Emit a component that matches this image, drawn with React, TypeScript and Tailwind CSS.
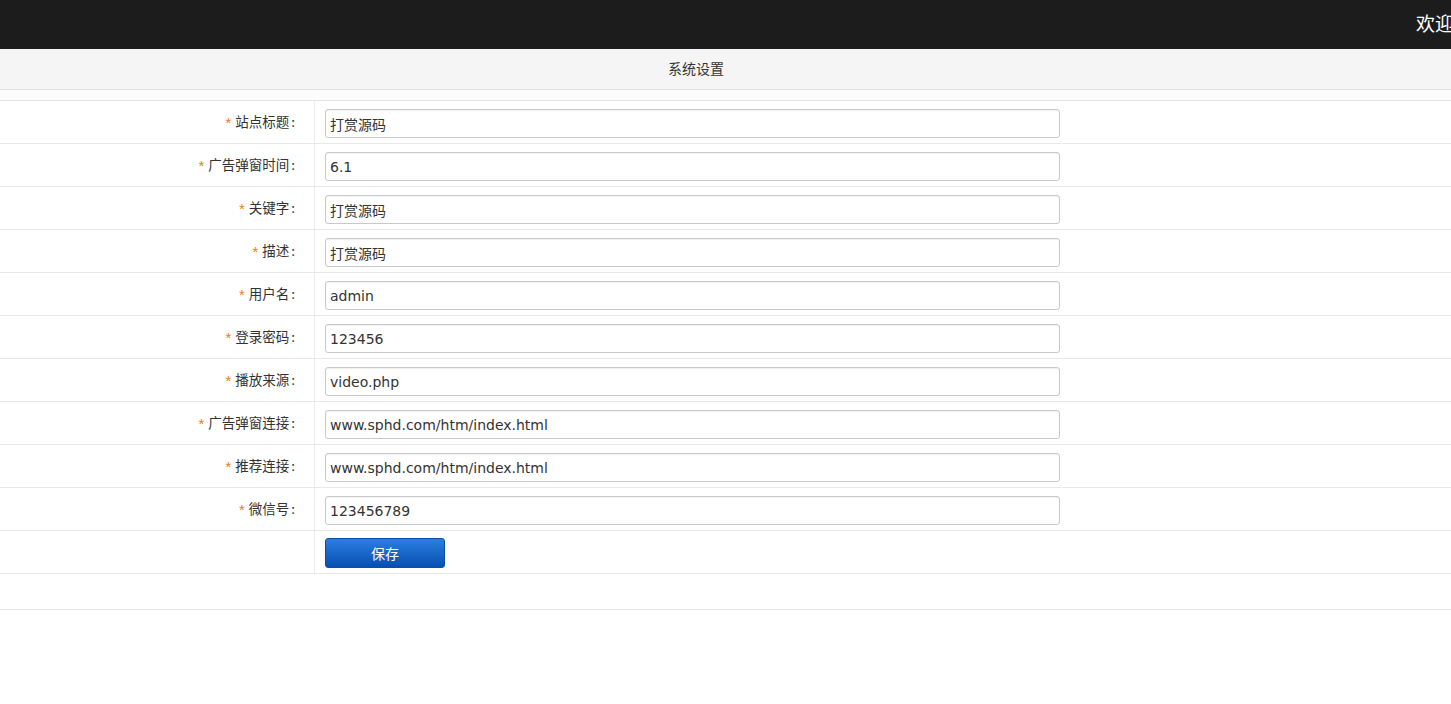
const ROWS = [
  { label: '站点标题', value: '打赏源码' },
  { label: '广告弹窗时间', value: '6.1' },
  { label: '关键字', value: '打赏源码' },
  { label: '描述', value: '打赏源码' },
  { label: '用户名', value: 'admin' },
  { label: '登录密码', value: '123456' },
  { label: '播放来源', value: 'video.php' },
  { label: '广告弹窗连接', value: 'www.sphd.com/htm/index.html' },
  { label: '推荐连接', value: 'www.sphd.com/htm/index.html' },
  { label: '微信号', value: '123456789' },
]

const cjk = "font-['Noto_Sans_CJK_SC',sans-serif]"

export default function App() {
  return (
    <div className={`min-h-[704px] w-[1451px] overflow-hidden bg-white text-[#333] ${cjk}`}>
      <div className="flex h-[49px] justify-end bg-[#1c1c1c]">
        <div className="w-[35px] overflow-hidden whitespace-nowrap pt-[10px] text-[19px] leading-[26px] text-white">欢迎</div>
      </div>

      <div className="h-[41px] border-b border-[#e2e2e2] bg-[#f5f5f5]">
        <div className="w-[1392px] text-center text-[14px] leading-[38px]">系统设置</div>
      </div>
      <div className="h-[11px] border-b border-[#e6e6e6] bg-[#fcfcfc]" />

      {ROWS.map((row) => (
        <div key={row.label} className="flex h-[43px] border-b border-[#e8e8e8]">
          <div className="flex w-[315px] items-start justify-end border-r border-[#ececec] pr-[19px] pt-[11px] text-[13.5px] leading-[18px]">
            <span className="mr-[4px] translate-y-[2px] font-['Liberation_Sans',sans-serif] text-[15px] text-[#ee7b1c]">*</span>
            <span>{row.label}</span>
            <span className="ml-[2px]">:</span>
          </div>
          <div className="pl-[10px] pt-[8px]">
            <input
              readOnly
              value={row.value}
              className="h-[29px] w-[735px] rounded-[3px] border border-[#c9c9c9] px-[4px] font-['DejaVu_Sans','Noto_Sans_CJK_SC',sans-serif] text-[14px] text-[#333] shadow-[inset_0_1px_1px_rgba(0,0,0,0.06)] outline-none"
            />
          </div>
        </div>
      ))}

      <div className="flex h-[43px] border-b border-[#e8e8e8]">
        <div className="w-[315px] border-r border-[#ececec]" />
        <div className="pl-[10px] pt-[7px]">
          <button className="h-[30px] w-[120px] rounded-[3px] border border-[#0a4fa8] bg-gradient-to-b from-[#2a7fe0] to-[#0550b3] text-[14px] text-white">
            保存
          </button>
        </div>
      </div>
      <div className="h-[36px] border-b border-[#e6e6e6]" />
    </div>
  )
}
